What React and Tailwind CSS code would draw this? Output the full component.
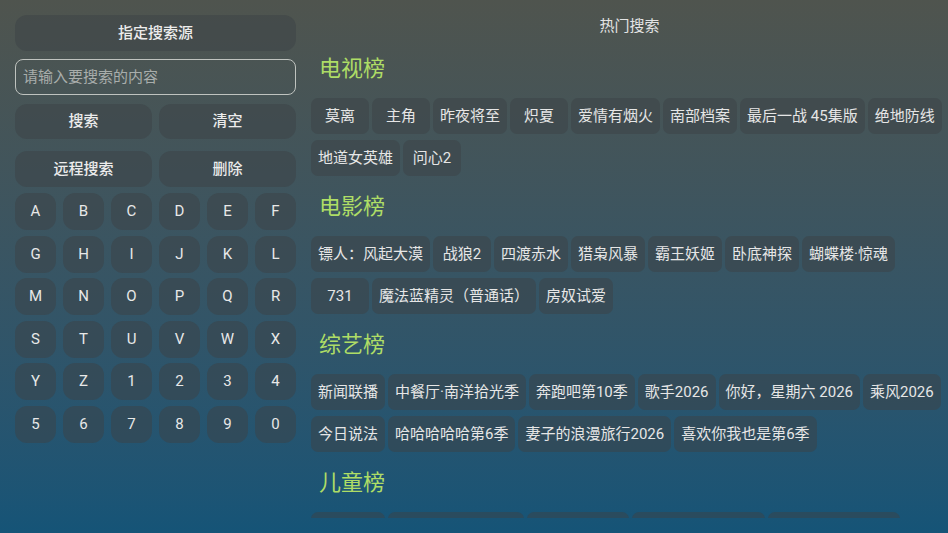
import React from "react";

const FONT = { fontFamily: 'Roboto, "Noto Sans CJK SC", sans-serif' };

const sections = [
  {
    title: "电视榜",
    items: ["莫离", "主角", "昨夜将至", "炽夏", "爱情有烟火", "南部档案", "最后一战 45集版", "绝地防线", "地道女英雄", "问心2"],
  },
  {
    title: "电影榜",
    items: ["镖人：风起大漠", "战狼2", "四渡赤水", "猎枭风暴", "霸王妖姬", "卧底神探", "蝴蝶楼·惊魂", "731", "魔法蓝精灵（普通话）", "房奴试爱"],
  },
  {
    title: "综艺榜",
    items: ["新闻联播", "中餐厅·南洋拾光季", "奔跑吧第10季", "歌手2026", "你好，星期六 2026", "乘风2026", "今日说法", "哈哈哈哈哈第6季", "妻子的浪漫旅行2026", "喜欢你我也是第6季"],
  },
];

const kidsWidths = [
  { id: "k1", cls: "w-[74px]" },
  { id: "k2", cls: "w-[136px]" },
  { id: "k3", cls: "w-[102px]" },
  { id: "k4", cls: "w-[133px]" },
  { id: "k5", cls: "w-[132px]" },
];

const keys = "ABCDEFGHIJKLMNOPQRSTUVWXYZ1234567890".split("");

function Btn({ children, className = "" }) {
  return (
    <div
      className={
        "flex items-center justify-center rounded-[12px] bg-[rgba(60,66,70,0.5)] text-[15px] font-medium text-[#ececec] " +
        className
      }
    >
      {children}
    </div>
  );
}

function Heading({ children }) {
  return (
    <div className="flex h-[60px] items-center pl-[8px] pt-[1px] text-[22px] leading-[28px] text-[#aedd66]">
      {children}
    </div>
  );
}

export default function App() {
  return (
    <div
      style={FONT}
      className="flex h-[533px] w-[948px] overflow-hidden bg-gradient-to-b from-[#4f544e] to-[#155477]"
    >
      {/* Left panel */}
      <div className="ml-[15px] flex w-[281px] shrink-0 flex-col pt-[15px]">
        <Btn className="h-[36px]">指定搜索源</Btn>
        <div className="mt-[8px] flex h-[36px] items-center rounded-[8px] border border-[#bfc3bf] pl-[7px] text-[15px] text-[#a8adab]">
          请输入要搜索的内容
        </div>
        <div className="mt-[9px] grid grid-cols-2 gap-x-[7px]">
          <Btn className="h-[35px]">搜索</Btn>
          <Btn className="h-[35px]">清空</Btn>
        </div>
        <div className="mt-[12px] grid grid-cols-2 gap-x-[7px]">
          <Btn className="h-[36px]">远程搜索</Btn>
          <Btn className="h-[36px]">删除</Btn>
        </div>
        <div className="mt-[6px] grid grid-cols-6 gap-x-[7px] gap-y-[5.5px]">
          {keys.map((k) => (
            <div
              key={k}
              className="flex h-[37px] items-center justify-center rounded-[12px] bg-[rgba(60,66,70,0.5)] text-[15px] text-[#e8e8e8]"
            >
              {k}
            </div>
          ))}
        </div>
      </div>

      {/* Right panel */}
      <div className="ml-[15px] h-[518px] flex-1 overflow-hidden">
        <div className="h-[38px] pt-[16px] text-center text-[15px] leading-[20px] text-[#e4e4e4]">
          热门搜索
        </div>
        {sections.map((s) => (
          <div key={s.title}>
            <Heading>{s.title}</Heading>
            <div className="flex flex-wrap gap-x-[3px] gap-y-[6px]">
              {s.items.map((it) => (
                <div
                  key={it}
                  className="flex h-[36px] min-w-[58px] items-center justify-center whitespace-nowrap rounded-[7px] bg-[rgba(60,66,70,0.5)] px-[7px] text-[15px] text-[#e6e6e6]"
                >
                  {it}
                </div>
              ))}
            </div>
          </div>
        ))}
        <div>
          <Heading>儿童榜</Heading>
          <div className="flex gap-x-[3px]">
            {kidsWidths.map((k) => (
              <div
                key={k.id}
                className={"h-[36px] rounded-[7px] bg-[rgba(60,66,70,0.5)] " + k.cls}
              />
            ))}
          </div>
        </div>
      </div>
    </div>
  );
}
